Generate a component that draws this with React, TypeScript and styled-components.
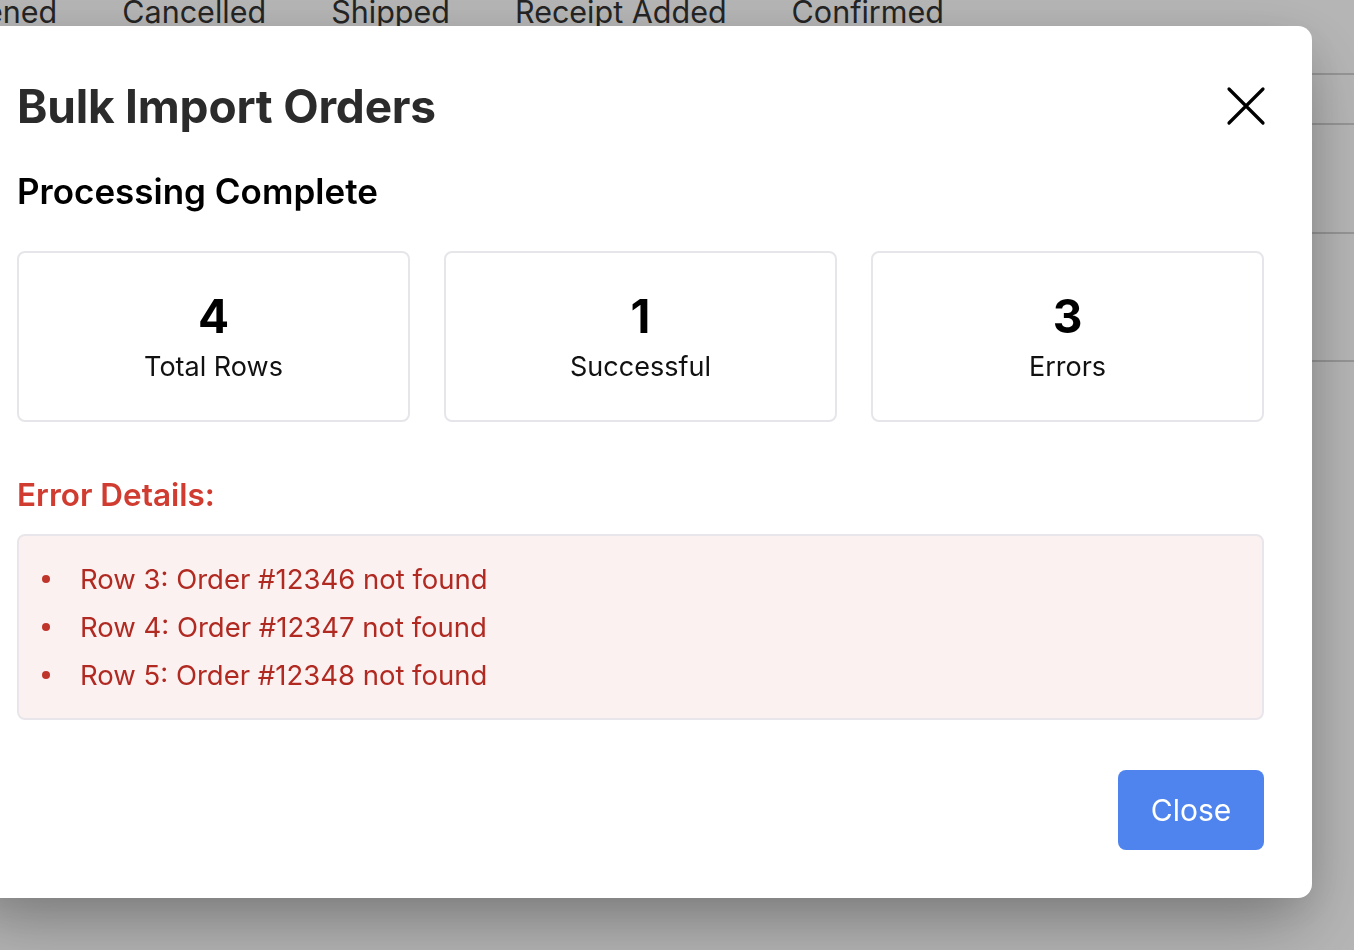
import React from "react";
import styled, { createGlobalStyle } from "styled-components";

const GlobalStyle = createGlobalStyle`
  html, body { margin: 0; padding: 0; }
  body {
    font-family: Inter, "Noto Sans", "Liberation Sans", sans-serif;
    background: #ffffff;
    color: #111;
    overflow: hidden;
  }
  * { box-sizing: border-box; }
`;

const Page = styled.div`
  width: 1354px;
  height: 950px;
  overflow: hidden;
  background: #ffffff;
`;

const TabBar = styled.div`
  display: flex;
  gap: 65px;
  height: 73px;
  margin-left: -57px;
  align-items: flex-start;
`;

const Tab = styled.div`
  font-size: 30.5px;
  line-height: 1;
  margin-top: -3px;
  color: #333;
  white-space: nowrap;
`;

const Table = styled.div`
  display: flex;
  flex-direction: column;
`;

const TableRow = styled.div<{ $h: number }>`
  height: ${(p) => p.$h}px;
  border-top: 2px solid #d2d2d2;
`;

const Overlay = styled.div`
  position: fixed;
  inset: 0;
  background: rgba(0, 0, 0, 0.29);
`;

const Modal = styled.div`
  position: absolute;
  left: -31px;
  top: 26px;
  width: 1343px;
  background: #ffffff;
  border-radius: 14px;
  padding: 48px;
  box-shadow: 0 30px 70px -6px rgba(0, 0, 0, 0.3), 0 10px 40px rgba(0, 0, 0, 0.08);
  display: flex;
  flex-direction: column;
`;

const Header = styled.div`
  display: flex;
  justify-content: space-between;
  align-items: center;
  height: 64px;
`;

const Title = styled.h1`
  margin: 0;
  font-size: 46px;
  font-weight: 700;
  color: #2b2b2b;
  letter-spacing: -0.2px;
  line-height: 1;
`;

const CloseIcon = styled.button`
  width: 40px;
  height: 40px;
  padding: 0;
  border: none;
  background: none;
  display: flex;
  align-items: center;
  justify-content: center;
  margin-right: -2px;
  cursor: pointer;
`;

const Subtitle = styled.h2`
  margin: 33px 0 0;
  font-size: 35px;
  font-weight: 600;
  color: #000;
  line-height: 40px;
`;

const Stats = styled.div`
  display: grid;
  grid-template-columns: repeat(3, 1fr);
  gap: 34px;
  margin-top: 40px;
`;

const StatCard = styled.div`
  height: 171px;
  border: 2px solid #e6e6ea;
  border-radius: 8px;
  display: flex;
  flex-direction: column;
  align-items: center;
  justify-content: center;
  gap: 8px;
`;

const StatValue = styled.div`
  font-size: 46px;
  font-weight: 700;
  line-height: 52px;
  color: #000;
`;

const StatLabel = styled.div`
  font-size: 27px;
  line-height: 34px;
  color: #111;
`;

const ErrorTitle = styled.h3`
  margin: 55px 0 0;
  font-size: 31.5px;
  font-weight: 600;
  line-height: 36px;
  color: #d13c31;
`;

const ErrorBox = styled.div`
  margin-top: 21px;
  background: #fcf1f1;
  border: 2px solid #e8e6ea;
  border-radius: 8px;
  padding: 19px 0;
`;

const ErrorList = styled.ul`
  margin: 0;
  padding: 0 0 0 23px;
  list-style: none;
`;

const ErrorItem = styled.li`
  display: flex;
  align-items: center;
  gap: 30px;
  font-size: 27.5px;
  line-height: 48px;
  color: #b02a22;
  &::before {
    content: "";
    width: 8px;
    height: 8px;
    border-radius: 50%;
    background: #c0352b;
    flex: none;
  }
`;

const Footer = styled.div`
  display: flex;
  justify-content: flex-end;
  margin-top: 50px;
`;

const PrimaryButton = styled.button`
  width: 146px;
  height: 80px;
  border: none;
  border-radius: 8px;
  background: #4f84ee;
  color: #ffffff;
  font-family: inherit;
  font-size: 30px;
  cursor: pointer;
`;

const tabs = ["Opened", "Cancelled", "Shipped", "Receipt Added", "Confirmed"];
const stats = [
  { value: 4, label: "Total Rows" },
  { value: 1, label: "Successful" },
  { value: 3, label: "Errors" },
];
const errors = [
  "Row 3: Order #12346 not found",
  "Row 4: Order #12347 not found",
  "Row 5: Order #12348 not found",
];

export default function App() {
  return (
    <>
      <GlobalStyle />
      <Page>
        <TabBar>
          {tabs.map((t) => (
            <Tab key={t}>{t}</Tab>
          ))}
        </TabBar>
        <Table>
          <TableRow $h={50} />
          <TableRow $h={109} />
          <TableRow $h={128} />
          <TableRow $h={600} />
        </Table>
      </Page>
      <Overlay>
        <Modal>
          <Header>
            <Title>Bulk Import Orders</Title>
            <CloseIcon aria-label="Close">
              <svg width="40" height="40" viewBox="0 0 40 40" fill="none">
                <path d="M3 3 L37 37 M37 3 L3 37" stroke="#000" strokeWidth="3.2" strokeLinecap="round" />
              </svg>
            </CloseIcon>
          </Header>
          <Subtitle>Processing Complete</Subtitle>
          <Stats>
            {stats.map((s) => (
              <StatCard key={s.label}>
                <StatValue>{s.value}</StatValue>
                <StatLabel>{s.label}</StatLabel>
              </StatCard>
            ))}
          </Stats>
          <ErrorTitle>Error Details:</ErrorTitle>
          <ErrorBox>
            <ErrorList>
              {errors.map((e) => (
                <ErrorItem key={e}>{e}</ErrorItem>
              ))}
            </ErrorList>
          </ErrorBox>
          <Footer>
            <PrimaryButton>Close</PrimaryButton>
          </Footer>
        </Modal>
      </Overlay>
    </>
  );
}
